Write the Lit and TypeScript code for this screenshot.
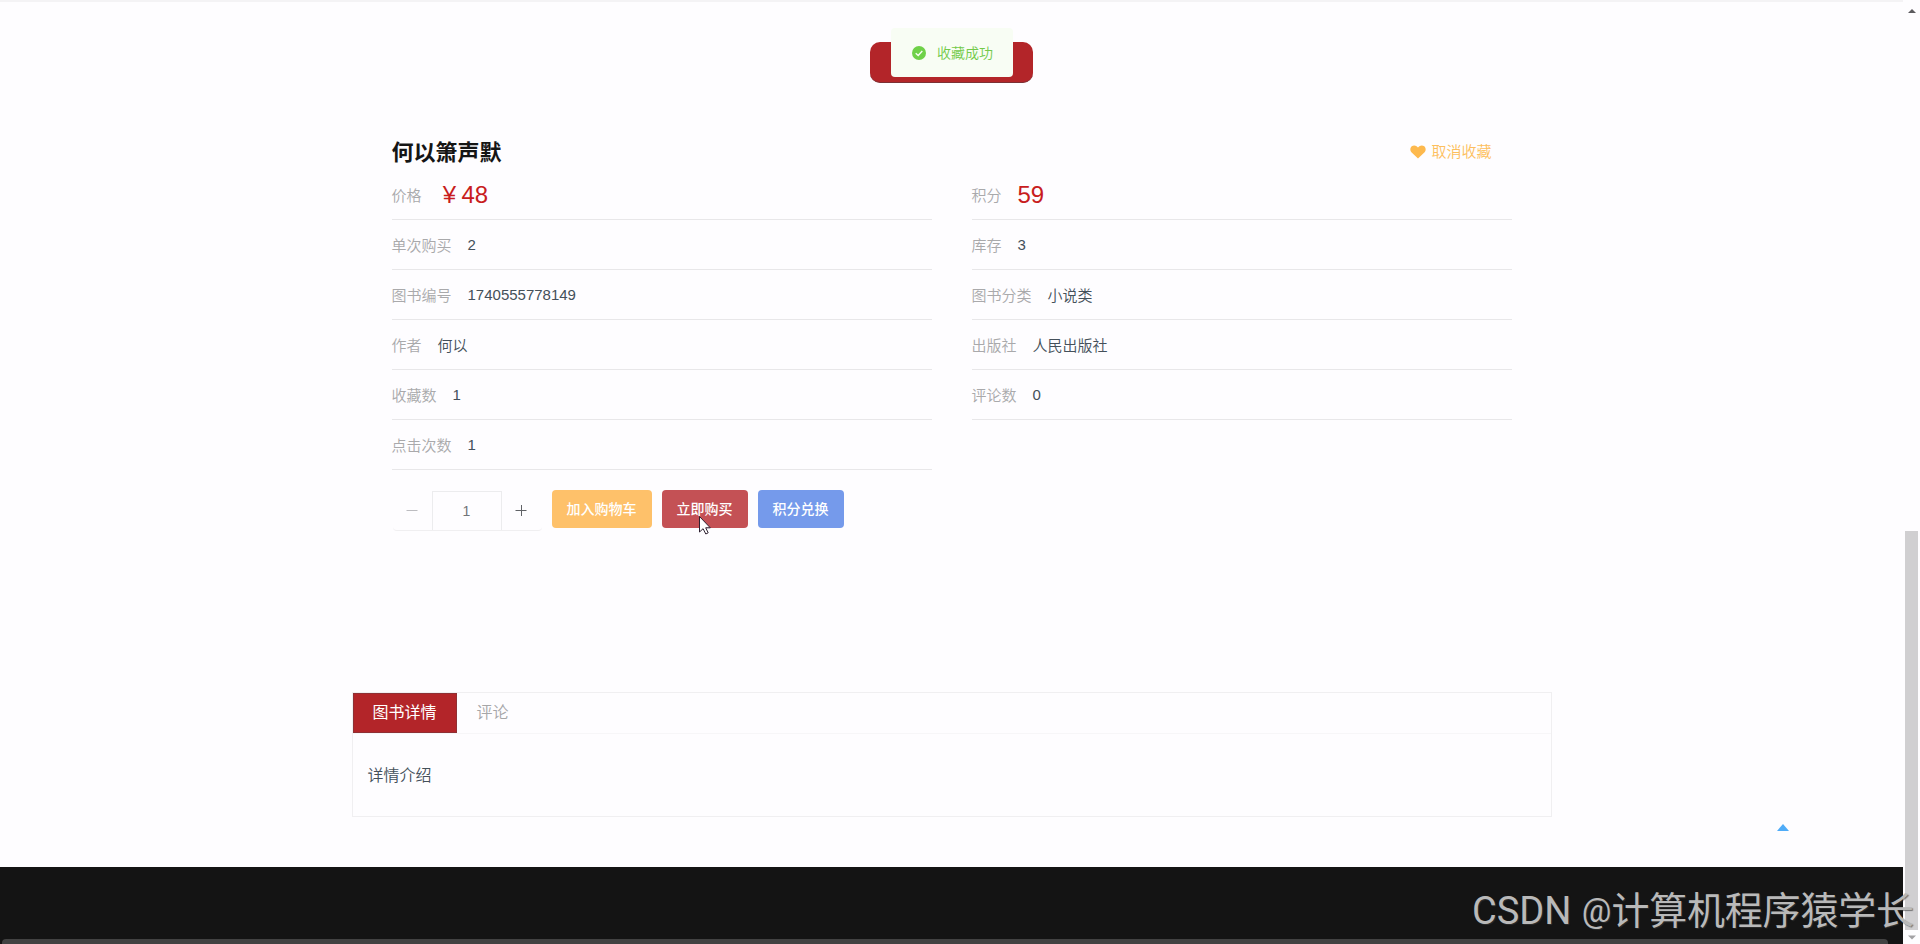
import { LitElement, html, css } from "lit";
import { customElement, state } from "lit/decorators.js";
import { classMap } from "lit/directives/class-map.js";

interface Field {
  label: string;
  value: string;
  accent?: boolean;
  currency?: boolean;
}

const FIELDS: Field[] = [
  { label: "价格", value: "48", accent: true, currency: true },
  { label: "积分", value: "59", accent: true },
  { label: "单次购买", value: "2" },
  { label: "库存", value: "3" },
  { label: "图书编号", value: "1740555778149" },
  { label: "图书分类", value: "小说类" },
  { label: "作者", value: "何以" },
  { label: "出版社", value: "人民出版社" },
  { label: "收藏数", value: "1" },
  { label: "评论数", value: "0" },
  { label: "点击次数", value: "1" },
];

@customElement("app-root")
export class AppRoot extends LitElement {
  @state() private tab = 0;
  @state() private count = 1;

  static styles = css`
    :host {
      display: block;
      position: relative;
      width: 1920px;
      height: 944px;
      overflow: hidden;
      background: #fefdff;
      color: #44505a;
      font-family: "Liberation Sans", "Noto Sans CJK SC", sans-serif;
      font-weight: 350;
    }
    * { box-sizing: border-box; }
    .page {
      width: 1903px;
      height: 944px;
      display: flex;
      flex-direction: column;
      align-items: center;
      border-top: 2px solid #f4f3f5;
    }
    .banner {
      flex: none;
      width: 163px;
      height: 41px;
      margin-top: 40px;
      border-radius: 10px;
      background: #b32529;
      border-bottom: 1px solid #7c3035;
    }
    .detail {
      flex: none;
      width: 1200px;
      height: 609px;
      padding: 49px 40px 0;
    }
    .head {
      display: flex;
      justify-content: space-between;
      align-items: center;
      height: 40px;
      padding-right: 20px;
    }
    .title {
      margin: 0;
      font-size: 22px;
      line-height: 40px;
      padding-top: 2px;
      font-weight: 700;
      color: #151515;
    }
    .fav {
      display: flex;
      align-items: center;
      gap: 5px;
      font-size: 15px;
      line-height: 40px;
      color: #fdbf5d;
    }
    .fav svg { display: block; }
    .fields {
      display: grid;
      grid-template-columns: 540px 540px;
      column-gap: 40px;
      grid-auto-rows: 50px;
      margin-top: -2px;
    }
    .field {
      display: flex;
      gap: 16px;
      border-bottom: 1px solid #e8e7e9;
      font-size: 15px;
      line-height: 51px;
      white-space: nowrap;
    }
    .label { color: #a9a9ab; }
    .digits { line-height: 49px; }
    .accent { font-size: 24px; line-height: 50px; color: #c81c20; }
    .yen { display: inline-block; width: 24px; text-align: center; }
    .actions {
      display: flex;
      align-items: flex-start;
      margin-top: 20px;
      gap: 10px;
    }
    .stepper {
      display: flex;
      width: 149px;
      height: 41px;
      margin-left: 1px;
      padding-right: 1px;
      border-bottom: 1px solid #f0eff1;
      border-radius: 4px;
    }
    .step {
      flex: 1;
      display: flex;
      align-items: center;
      justify-content: center;
    }
    .num {
      width: 70px;
      margin-top: 1px;
      border: 1px solid #ececee;
      border-bottom: 0;
      font-size: 14px;
      line-height: 38px;
      text-align: center;
      color: #727478;
    }
    .btn {
      height: 38px;
      padding: 0 15px;
      border: 0;
      border-radius: 4px;
      color: #fff;
      font: 500 14px/38px "Liberation Sans", "Noto Sans CJK SC", sans-serif;
    }
    .cart { background: #fec16a; }
    .buy { background: #c45155; }
    .swap { background: #759aeb; }
    .tabs {
      flex: none;
      width: 1200px;
      height: 125px;
      border: 1px solid #f0eff1;
    }
    .bar {
      display: flex;
      height: 41px;
      border-bottom: 1px solid #f7f6f8;
    }
    .tab {
      height: 40px;
      padding: 0 20px;
      font-size: 16px;
      line-height: 40px;
      color: #a6a6a8;
    }
    .tab.on {
      background: #b32529;
      color: #fff;
      font-weight: 400;
      box-shadow: inset 0 0 0 1px #8f3034;
    }
    .pane {
      padding: 22px 15px;
      font-size: 16px;
      line-height: 40px;
    }
    .footer {
      flex: none;
      width: 100%;
      height: 77px;
      margin-top: 50px;
      padding: 72px 0 0 2px;
      background: #141414;
    }
    .hbar {
      width: 1886px;
      height: 5px;
      border-radius: 4px 4px 0 0;
      background: #424242;
    }
    .toast {
      position: absolute;
      left: 891px;
      top: 28px;
      width: 122px;
      height: 49px;
      display: flex;
      align-items: center;
      gap: 11px;
      padding-left: 21px;
      border-radius: 4px;
      background: #f8fdf4;
      color: #72ca49;
      font-size: 14px;
      line-height: 50px;
      white-space: nowrap;
    }
    .toast span { padding-top: 1px; }
    .top { position: absolute; left: 1777px; top: 824px; }
    .cursor { position: absolute; left: 698px; top: 515px; }
    .vbar {
      position: absolute;
      left: 1905px;
      top: 531px;
      width: 13px;
      height: 399px;
      background: #d0cfd1;
    }
    .up { position: absolute; left: 1908px; top: 9px; }
    .down { position: absolute; left: 1908px; top: 935px; }
    .mark {
      position: absolute;
      left: 1472px;
      top: 883px;
      font-family: Roboto, "Noto Sans CJK SC", sans-serif;
      font-weight: 400;
      font-size: 38px;
      line-height: 56px;
      white-space: nowrap;
      color: #b9b9b9;
      text-shadow: 1px 1px 1px rgba(60, 60, 60, 0.6);
    }
    .at { font-size: 33px; margin-left: 1px; vertical-align: 2px; line-height: 1; }
    .name { letter-spacing: -0.2px; }
  `;

  render() {
    return html`
      <div class="page">
        <div class="banner"></div>
        <section class="detail">
          <div class="head">
            <h1 class="title">何以箫声默</h1>
            <div class="fav">
              <svg width="16" height="14" viewBox="0 0 16 14">
                <path fill="#fdb94e" d="M8 13.6 1.4 7.2C-.2 5.5.1 2.700 1.700 1.300 3.600-.2 6.300.1 8 2.500 9.700.1 12.400-.2 14.300 1.300 15.900 2.700 16.200 5.500 14.600 7.200Z" />
              </svg>
              <span>取消收藏</span>
            </div>
          </div>
          <div class="fields">
            ${FIELDS.map(
              (f) => html`<div class="field">
                <span class="label">${f.label}</span>
                <span class=${classMap({ accent: !!f.accent, digits: !f.accent && /^\d+$/.test(f.value) })}
                  >${f.currency ? html`<span class="yen">¥</span>` : ""}${f.value}</span>
              </div>`
            )}
          </div>
          <div class="actions">
            <div class="stepper">
              <div class="step" @click=${() => (this.count = Math.max(1, this.count - 1))}>
                <svg width="12" height="12"><path d="M0.500 6.500h11" stroke="#bcbcc0" /></svg>
              </div>
              <div class="num">${this.count}</div>
              <div class="step" @click=${() => this.count++}>
                <svg width="12" height="12"><path d="M0.500 6.500h11M6.500 1v11" stroke="#606266" /></svg>
              </div>
            </div>
            <button class="btn cart">加入购物车</button>
            <button class="btn buy">立即购买</button>
            <button class="btn swap">积分兑换</button>
          </div>
        </section>
        <section class="tabs">
          <div class="bar">
            ${["图书详情", "评论"].map(
              (t, i) => html`<div class="tab ${i === this.tab ? "on" : ""}" @click=${() => (this.tab = i)}>${t}</div>`
            )}
          </div>
          <div class="pane">详情介绍</div>
        </section>
        <footer class="footer"><div class="hbar"></div></footer>
      </div>
      <div class="toast">
        <svg width="14" height="14" viewBox="0 0 14 14">
          <circle cx="7" cy="7" r="7" fill="#6fd148" />
          <path d="M3.700 7.200 6.200 9.500 10.300 5" fill="none" stroke="#f8fdf4" stroke-width="1.400" />
        </svg>
        <span>收藏成功</span>
      </div>
      <svg class="top" width="12" height="7"><path d="M6 0 12 7H0Z" fill="#4facf8" /></svg>
      <svg class="cursor" width="15" height="22" viewBox="0 0 15 22">
        <path d="M1.500 1.500v15.500l3.600-3.300 2.700 5.300 2.400-1.200-2.500-5h4.600Z" fill="#fff" stroke="#2d2030" />
      </svg>
      <div class="vbar"></div>
      <svg class="up" width="8" height="4"><path d="M4 0 8 4H0Z" fill="#5c5b5e" /></svg>
      <svg class="down" width="8" height="5"><path d="M0 0.500H8L4 4.500Z" fill="#a3a2a5" /></svg>
      <div class="mark">CSDN <span class="at">@</span><span class="name">计算机程序猿学长</span></div>
    `;
  }
}
